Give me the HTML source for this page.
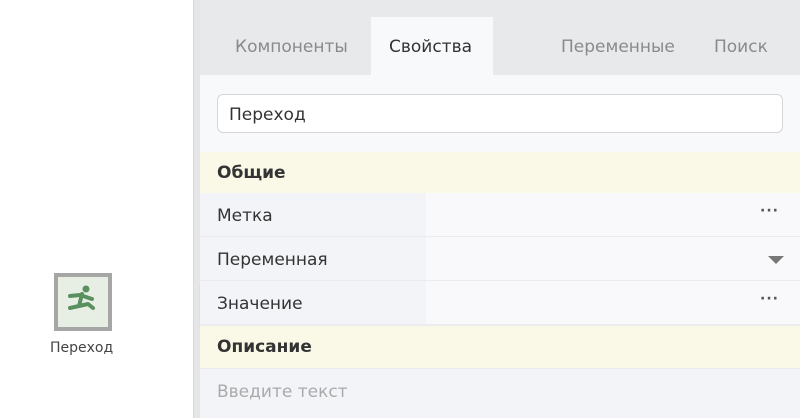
<!DOCTYPE html>
<html><head><meta charset="utf-8"><style>
*{margin:0;padding:0;box-sizing:border-box}
body{width:800px;height:418px;overflow:hidden;background:#fff;font-family:"DejaVu Sans","Liberation Sans",sans-serif;position:relative;color:#333}
.a{position:absolute;white-space:nowrap}
.strip{left:193px;top:0;width:7px;height:418px;background:#e6e6e8;border-left:1px solid #d8d8da}
.panel{left:200px;top:0;width:600px;height:418px;background:#f8f9fb}
.tabs{left:200px;top:0;width:600px;height:75px;background:#e8e9eb}
.tab{font-size:17px;color:#8a8a8a;top:37px}
.active{left:371px;top:17px;width:122px;height:58px;background:#f8f9fb}
.input{left:217px;top:94px;width:566px;height:39px;background:#fff;border:1px solid #d6d6d8;border-radius:6px;font-size:17px;color:#333;padding:10px 0 0 11px}
.hdr{left:200px;width:600px;height:42px;background:#faf8e6;font-weight:bold;font-size:17px;padding:11px 0 0 17px;color:#333}
.row{left:200px;width:600px;height:44px;background:#f9f9fb;border-bottom:1px solid #ececef}
.row .l{position:absolute;left:0;top:0;width:226px;height:43px;background:#f3f4f8;font-size:17px;padding:13px 0 0 17px;color:#333}
.dots{position:absolute;right:21px;top:10px;font-size:14px;color:#555;letter-spacing:1px;font-weight:bold}
.tri{position:absolute;right:16px;top:19px;width:0;height:0;border-left:8px solid transparent;border-right:8px solid transparent;border-top:8px solid #777}
</style></head><body>
<div class="a strip"></div>
<div class="a panel"></div>
<div class="a tabs"></div>
<div class="a active"></div>
<div class="a tab" style="left:235px">Компоненты</div>
<div class="a tab" style="left:389px;color:#333">Свойства</div>
<div class="a tab" style="left:561px">Переменные</div>
<div class="a tab" style="left:714px">Поиск</div>
<div class="a input">Переход</div>
<div class="a hdr" style="top:152px">Общие</div>
<div class="a row" style="top:193px"><div class="l">Метка</div><div class="dots">···</div></div>
<div class="a row" style="top:237px"><div class="l">Переменная</div><div class="tri"></div></div>
<div class="a row" style="top:281px;box-shadow:0 2px 3px rgba(0,0,0,0.06)"><div class="l">Значение</div><div class="dots">···</div></div>
<div class="a hdr" style="top:326px;height:42px">Описание</div>
<div class="a" style="left:200px;top:368px;width:600px;height:50px;background:#f3f4f8;border-top:1px solid #ececef;font-size:17px;color:#aaa;padding:13px 0 0 17px">Введите текст</div>
<div class="a" style="left:54px;top:273px;width:58px;height:58px;border:4px solid #a6a6a6;background:#e7eee3">
<svg width="50" height="50" viewBox="0 0 50 50"><g fill="none" stroke="#5a9060" stroke-width="4" stroke-linecap="round" stroke-linejoin="round"><path d="M24 17 L21 29 L12 31"/><path d="M21 29 L30 27 L35 31"/><path d="M12 19 L22 18 L34 22"/></g><circle cx="28" cy="12" r="3.5" fill="#5a9060"/></svg></div>
<div class="a" style="left:50px;top:340px;font-size:14px;color:#444">Переход</div>
</body></html>
